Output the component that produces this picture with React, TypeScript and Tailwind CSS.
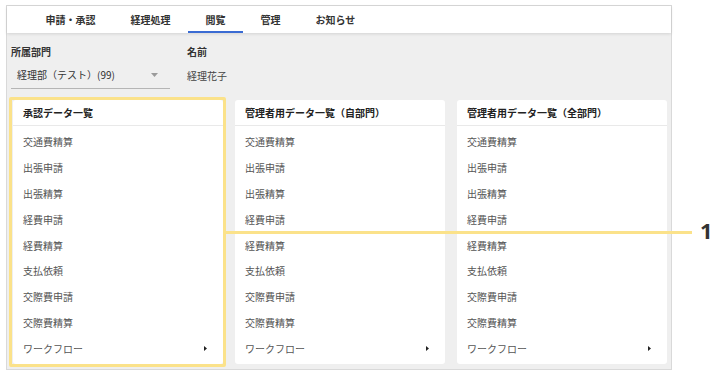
import React from "react";

const tabs = ["申請・承認", "経理処理", "閲覧", "管理", "お知らせ"];

const items = [
  "交通費精算",
  "出張申請",
  "出張精算",
  "経費申請",
  "経費精算",
  "支払依頼",
  "交際費申請",
  "交際費精算",
];

const cards = [
  "承認データ一覧",
  "管理者用データ一覧（自部門）",
  "管理者用データ一覧（全部門）",
];

function Card({ title }: { title: string }) {
  return (
    <div className="w-[210px] h-[264px] bg-white rounded-[3px] flex flex-col">
      <div className="h-[26px] border-b border-[#e9e9e9] px-[10px] flex items-center text-[10px] font-bold text-[#222]">
        {title}
      </div>
      <div className="pt-[3px] flex flex-col">
        {items.map((item) => (
          <div
            key={item}
            className="h-[25.8px] px-[10px] flex items-center text-[10px] text-[#555]"
          >
            {item}
          </div>
        ))}
        <div className="h-[25.8px] pl-[10px] pr-[16px] flex items-center justify-between text-[10px] text-[#555]">
          <span>ワークフロー</span>
          <svg width="3" height="5" viewBox="0 0 3 5">
            <path d="M0 0 L3 2.5 L0 5 Z" fill="#222" />
          </svg>
        </div>
      </div>
    </div>
  );
}

export default function App() {
  return (
    <div className="relative w-[721px] h-[374px] bg-white font-['Noto_Sans_CJK_JP',sans-serif] overflow-hidden">
      <div className="pt-[5px] pl-[6px]">
        <div className="w-[666px] h-[365px] border border-[#d9d9d9] bg-[#efefef] flex flex-col">
          <div className="h-[27px] bg-white flex pl-[21px] shadow-[0_1px_3px_rgba(0,0,0,0.12)] relative z-10">
            {tabs.map((t) => (
              <div
                key={t}
                className="relative h-full px-[17.5px] flex items-center text-[10px] font-bold text-[#333]"
              >
                {t}
                {t === "閲覧" && (
                  <div className="absolute left-0 right-0 bottom-0 h-[2px] bg-[#3a6bd3]" />
                )}
              </div>
            ))}
          </div>

          <div className="pl-[4px] pt-[12px] flex gap-[17px]">
            <div className="w-[159px]">
              <div className="h-[14px] leading-[14px] text-[10px] font-bold text-[#333]">
                所属部門
              </div>
              <div className="mt-[2px] h-[28px] border-b border-[#b5b5b5] pl-[6px] pr-[12px] flex items-center justify-between text-[10px] text-[#333]">
                <span>経理部（テスト）(99)</span>
                <svg width="7" height="4" viewBox="0 0 7 4">
                  <path d="M0 0 L7 0 L3.5 4 Z" fill="#9a9a9a" />
                </svg>
              </div>
            </div>
            <div>
              <div className="h-[14px] leading-[14px] text-[10px] font-bold text-[#333]">
                名前
              </div>
              <div className="mt-[2px] h-[28px] flex items-center text-[10px] text-[#444]">
                経理花子
              </div>
            </div>
          </div>

          <div className="mt-[11px] pl-[6px] flex gap-[12px]">
            {cards.map((c) => (
              <Card key={c} title={c} />
            ))}
          </div>
        </div>
      </div>

      <div className="absolute left-[9px] top-[97px] w-[217px] h-[270px] border-[3px] border-[#fbe28a] rounded-[2px]" />
      <div className="absolute left-[226px] top-[231px] w-[466px] h-[3px] bg-[#fbe28a]" />
      <div className="absolute left-[700px] top-[217px] text-[22px] leading-[26px] font-bold text-[#333] font-['Noto_Sans',sans-serif]">
        1
      </div>
    </div>
  );
}
